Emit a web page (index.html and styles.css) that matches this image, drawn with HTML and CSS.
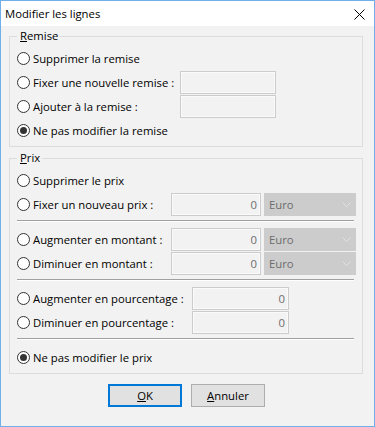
FILE: index.html
```html
<!DOCTYPE html>
<html lang="fr">
<head>
<meta charset="utf-8">
<title>Modifier les lignes</title>
<link rel="stylesheet" href="styles.css">
</head>
<body>
<div class="window">
  <div class="titlebar">
    <span class="title">Modifier les lignes</span>
    <svg class="close" width="11" height="11" viewBox="0 0 11 11">
      <path d="M0.5 0.5 L10.5 10.5 M10.5 0.5 L0.5 10.5" stroke="#000" stroke-width="1" fill="none"/>
    </svg>
  </div>
  <div class="body">
    <div class="group remise">
      <span class="legend"><u>R</u>emise</span>
      <div class="row"><span class="radio"></span><span class="lbl">Supprimer la remise</span></div>
      <div class="row"><span class="radio"></span><span class="lbl">Fixer une nouvelle remise :</span><span class="field"></span></div>
      <div class="row"><span class="radio"></span><span class="lbl">Ajouter à la remise :</span><span class="field"></span></div>
      <div class="row"><span class="radio checked"></span><span class="lbl">Ne pas modifier la remise</span></div>
    </div>
    <div class="group prix">
      <span class="legend"><u>P</u>rix</span>
      <div class="row"><span class="radio"></span><span class="lbl">Supprimer le prix</span></div>
      <div class="row"><span class="radio"></span><span class="lbl">Fixer un nouveau prix :</span><span class="field num">0</span><span class="select">Euro<svg class="chev" width="9" height="5" viewBox="0 0 9 5"><path d="M0.5 0.5 L4.5 4.5 L8.5 0.5" stroke="#e2e2e2" fill="none"/></svg></span></div>
      <div class="sep"></div>
      <div class="row"><span class="radio"></span><span class="lbl">Augmenter en montant :</span><span class="field num">0</span><span class="select">Euro<svg class="chev" width="9" height="5" viewBox="0 0 9 5"><path d="M0.5 0.5 L4.5 4.5 L8.5 0.5" stroke="#e2e2e2" fill="none"/></svg></span></div>
      <div class="row"><span class="radio"></span><span class="lbl">Diminuer en montant :</span><span class="field num">0</span><span class="select">Euro<svg class="chev" width="9" height="5" viewBox="0 0 9 5"><path d="M0.5 0.5 L4.5 4.5 L8.5 0.5" stroke="#e2e2e2" fill="none"/></svg></span></div>
      <div class="sep"></div>
      <div class="row pct"><span class="radio"></span><span class="lbl">Augmenter en pourcentage :</span><span class="field num">0</span></div>
      <div class="row pct"><span class="radio"></span><span class="lbl">Diminuer en pourcentage :</span><span class="field num">0</span></div>
      <div class="sep"></div>
      <div class="row"><span class="radio checked"></span><span class="lbl">Ne pas modifier le prix</span></div>
    </div>
    <div class="buttons">
      <button class="btn default"><u>O</u>K</button>
      <button class="btn"><u>A</u>nnuler</button>
    </div>
  </div>
</div>
</body>
</html>
```

FILE: styles.css
```css
html, body {
  margin: 0;
  padding: 0;
  background: #f2f2f2;
}
body {
  font-family: "Open Sans", "Noto Sans", sans-serif;
  font-size: 11.3px;
  color: #000;
}
.window {
  width: 375px;
  height: 427px;
  box-sizing: border-box;
  border: 1px solid #6fb0ec;
  background: #f2f2f2;
  overflow: hidden;
}
.titlebar {
  height: 25px;
  background: #fff;
  display: flex;
  align-items: center;
  justify-content: space-between;
  padding-left: 4px;
  line-height: 15px;
}
.close {
  margin-right: 9px;
  margin-top: 1px;
}
.body {
  padding: 10px 0 0 8px;
}
.group {
  position: relative;
  width: 354px;
  box-sizing: border-box;
  border: 1px solid #dcdcdc;
  padding: 9px 0 4px 0;
}
.group.prix {
  margin-top: 11px;
}
.legend {
  position: absolute;
  top: -9px;
  left: 7px;
  padding: 0 2px 0 3px;
  background: #f2f2f2;
  line-height: 15px;
}
.row {
  display: flex;
  align-items: center;
  height: 24px;
  padding-left: 7px;
  line-height: 15px;
}
.radio {
  width: 13px;
  height: 13px;
  box-sizing: border-box;
  border: 1px solid #333;
  border-radius: 50%;
  background: #fff;
  margin-right: 3px;
  flex: none;
  display: flex;
  align-items: center;
  justify-content: center;
}
.radio.checked::after {
  content: "";
  width: 7px;
  height: 7px;
  border-radius: 50%;
  background: #333;
}
.lbl {
  white-space: nowrap;
}
.remise .lbl {
  width: 147px;
}
.prix .lbl {
  width: 138px;
}
.prix .pct .lbl {
  width: 159px;
}
.field {
  height: 23px;
  box-sizing: border-box;
  border: 1px solid #cccccc;
  box-shadow: inset 0 0 0 1px #fafafa;
  background: #f2f2f2;
  flex: none;
}
.remise .field {
  width: 96px;
}
.prix .field {
  width: 90px;
}
.prix .pct .field {
  width: 97px;
}
.num {
  color: #6d6d6d;
  text-align: right;
  padding-right: 3px;
  line-height: 21px;
}
.select {
  margin-left: 3px;
  width: 92px;
  height: 23px;
  box-sizing: border-box;
  background: #cccccc;
  color: #6d6d6d;
  padding-left: 5px;
  display: flex;
  align-items: center;
  justify-content: space-between;
  padding-right: 5px;
}
.sep {
  height: 0;
  border-top: 1px solid #a0a0a0;
  border-bottom: 1px solid #ffffff;
  margin: 4px 8px 5px 7px;
}
.buttons {
  display: flex;
  gap: 9px;
  padding-left: 99px;
  margin-top: 10px;
}
.btn {
  width: 74px;
  height: 23px;
  box-sizing: border-box;
  border: 1px solid #adadad;
  background: #e1e1e1;
  font-family: inherit;
  font-size: 11.3px;
  color: #000;
  padding: 0;
  line-height: 15px;
}
.btn.default {
  border: 2px solid #0078d7;
}
```
